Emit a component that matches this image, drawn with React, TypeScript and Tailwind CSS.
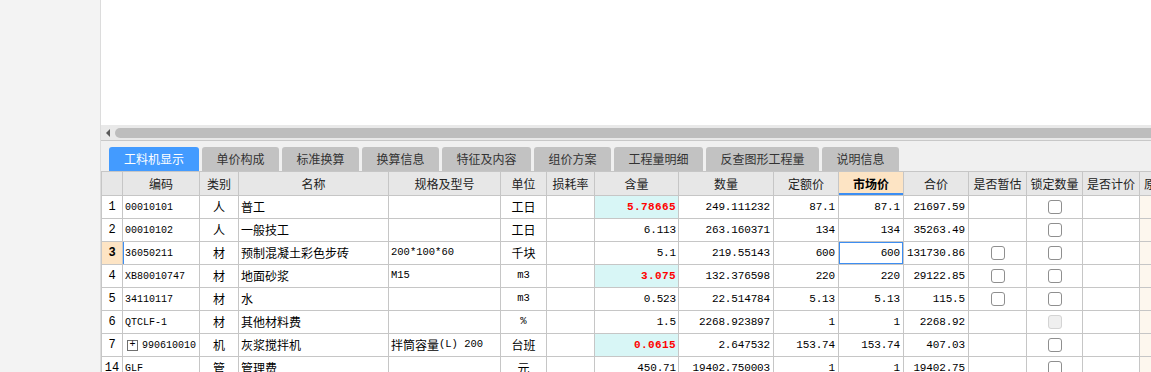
import React from "react";

const cjk = "font-['Noto_Sans_CJK_SC','Noto_Sans',sans-serif]";
const mono = "font-['Liberation_Mono','Noto_Sans_CJK_SC',monospace]";

const tabs = [
  { label: "工料机显示", w: "w-[90px]", active: true },
  { label: "单价构成", w: "w-[77px]" },
  { label: "标准换算", w: "w-[77px]" },
  { label: "换算信息", w: "w-[77px]" },
  { label: "特征及内容", w: "w-[89px]" },
  { label: "组价方案", w: "w-[77px]" },
  { label: "工程量明细", w: "w-[89px]" },
  { label: "反查图形工程量", w: "w-[113px]" },
  { label: "说明信息", w: "w-[77px]" },
];

const cols = [
  { key: "n", title: "", w: "w-[21px]" },
  { key: "code", title: "编码", w: "w-[77px]" },
  { key: "type", title: "类别", w: "w-[39px]" },
  { key: "name", title: "名称", w: "w-[150px]" },
  { key: "spec", title: "规格及型号", w: "w-[112px]" },
  { key: "unit", title: "单位", w: "w-[46px]" },
  { key: "loss", title: "损耗率", w: "w-[48px]" },
  { key: "qty", title: "含量", w: "w-[84px]" },
  { key: "amt", title: "数量", w: "w-[95px]" },
  { key: "quota", title: "定额价", w: "w-[65px]" },
  { key: "market", title: "市场价", w: "w-[65px]" },
  { key: "total", title: "合价", w: "w-[65px]" },
  { key: "est", title: "是否暂估", w: "w-[58px]" },
  { key: "lock", title: "锁定数量", w: "w-[56px]" },
  { key: "priced", title: "是否计价", w: "w-[57px]" },
  { key: "orig", title: "原始含量", w: "w-[60px]" },
];

type Row = {
  n: string;
  code: string;
  plus?: boolean;
  type: string;
  name: string;
  spec?: React.ReactNode;
  unit: string;
  unitMono?: boolean;
  qty: string;
  qtyHi?: boolean;
  amt: string;
  quota: string;
  market: string;
  total: string;
  est?: boolean;
  lock: "on" | "off";
  selected?: boolean;
};

const rows: Row[] = [
  { n: "1", code: "00010101", type: "人", name: "普工", unit: "工日", qty: "5.78665", qtyHi: true, amt: "249.111232", quota: "87.1", market: "87.1", total: "21697.59", lock: "on" },
  { n: "2", code: "00010102", type: "人", name: "一般技工", unit: "工日", qty: "6.113", amt: "263.160371", quota: "134", market: "134", total: "35263.49", lock: "on" },
  { n: "3", code: "36050211", type: "材", name: "预制混凝土彩色步砖", spec: <span className={mono}>200*100*60</span>, unit: "千块", qty: "5.1", amt: "219.55143", quota: "600", market: "600", total: "131730.86", est: true, lock: "on", selected: true },
  { n: "4", code: "XB80010747", type: "材", name: "地面砂浆", spec: <span className={mono}>M15</span>, unit: "m3", unitMono: true, qty: "3.075", qtyHi: true, amt: "132.376598", quota: "220", market: "220", total: "29122.85", est: true, lock: "on" },
  { n: "5", code: "34110117", type: "材", name: "水", unit: "m3", unitMono: true, qty: "0.523", amt: "22.514784", quota: "5.13", market: "5.13", total: "115.5", est: true, lock: "on" },
  { n: "6", code: "QTCLF-1", type: "材", name: "其他材料费", unit: "%", unitMono: true, qty: "1.5", amt: "2268.923897", quota: "1", market: "1", total: "2268.92", lock: "off" },
  {
    n: "7", code: "990610010", plus: true, type: "机", name: "灰浆搅拌机",
    spec: (<><span className={`${cjk} text-[12px]`}>拌筒容量</span><span className={mono}>(L) 200</span></>),
    unit: "台班", qty: "0.0615", qtyHi: true, amt: "2.647532", quota: "153.74", market: "153.74", total: "407.03", lock: "on",
  },
  { n: "14", code: "GLF", type: "管", name: "管理费", unit: "元", qty: "450.71", amt: "19402.750003", quota: "1", market: "1", total: "19402.75", lock: "on" },
];

function Checkbox({ disabled = false }: { disabled?: boolean }) {
  return (
    <span
      className={`block w-[14px] h-[14px] rounded-[3px] border ${
        disabled ? "border-[#d4d4d4] bg-[#efefef]" : "border-[#8f8f8f] bg-white"
      }`}
    />
  );
}

const cellBase = "shrink-0 box-border h-full border-r border-[#c6c6c6] flex items-center overflow-hidden whitespace-nowrap";

function DataRow({ r }: { r: Row }) {
  const num = `${mono} text-[11px] tracking-[-0.15px] text-black justify-end pr-[3px]`;
  return (
    <div className="flex h-[23px] box-border border-b border-l border-[#c6c6c6]">
      <div className={`${cellBase} w-[21px] justify-center ${mono} text-[12px] ${r.selected ? "bg-[#fde4c4] font-bold" : "bg-white"}`}>
        {r.n}
      </div>
      <div className={`${cellBase} w-[77px] relative pl-[2px] ${mono} text-[10px] text-black`}>
        {r.selected && <span className="absolute left-[-1px] top-0 bottom-0 w-[2px] bg-[#3d8ef2]" />}
        {r.plus && (
          <span className="mr-[4px] ml-[2px] flex w-[11px] h-[11px] shrink-0 items-center justify-center border border-[#6f6f6f] text-[10px] leading-none">
            +
          </span>
        )}
        {r.code}
      </div>
      <div className={`${cellBase} w-[39px] justify-center ${cjk} text-[12px] text-black`}>{r.type}</div>
      <div className={`${cellBase} w-[150px] pl-[2px] ${cjk} text-[12px] text-black`}>{r.name}</div>
      <div className={`${cellBase} w-[112px] pl-[2px] text-[10.5px] text-black`}>{r.spec}</div>
      <div className={`${cellBase} w-[46px] justify-center text-black ${r.unitMono ? `${mono} text-[10.5px]` : `${cjk} text-[12px]`}`}>
        {r.unit}
      </div>
      <div className={`${cellBase} w-[48px]`} />
      <div
        className={`${cellBase} w-[84px] ${mono} justify-end pr-[2px] ${
          r.qtyHi ? "bg-[#d8f6f6] text-[#ff0000] font-bold text-[11px] tracking-[0.4px]" : "text-black text-[11px] tracking-[-0.15px]"
        }`}
      >
        {r.qty}
      </div>
      <div className={`${cellBase} w-[95px] ${num}`}>{r.amt}</div>
      <div className={`${cellBase} w-[65px] ${num}`}>{r.quota}</div>
      <div className={`${cellBase} w-[65px] relative ${num}`}>
        {r.selected && <span className="absolute -left-px -top-px -right-px -bottom-px border-2 border-[#3d8ef2]" />}
        {r.market}
      </div>
      <div className={`${cellBase} w-[65px] ${num}`}>{r.total}</div>
      <div className={`${cellBase} w-[58px] justify-center`}>{r.est && <Checkbox />}</div>
      <div className={`${cellBase} w-[56px] justify-center`}>
        <Checkbox disabled={r.lock === "off"} />
      </div>
      <div className={`${cellBase} w-[57px]`} />
      <div className={`${cellBase} w-[60px] bg-[#fdf7ee]`} />
    </div>
  );
}

export default function App() {
  return (
    <div className="flex h-[372px] w-[1151px] overflow-hidden bg-white">
      <aside className="w-[101px] shrink-0 bg-[#f3f3f3] border-r border-[#dcdcdc]" />

      <main className="flex min-w-0 flex-1 flex-col overflow-hidden">
        <div className="h-[125px] shrink-0 bg-white" />

        {/* horizontal scrollbar */}
        <div className="flex h-[16px] shrink-0 items-start box-border border-b border-[#c8c8c8] bg-[#e9e9e9] pt-[3px]">
          <span className="ml-[5px] mt-[1px] h-0 w-0 border-y-[4px] border-r-[4px] border-y-transparent border-r-[#5a5a5a]" />
          <span className="ml-[5px] h-[10px] flex-1 rounded-l-full bg-[#bdbdbd]" />
        </div>

        {/* tabs */}
        <div className="flex h-[30px] shrink-0 items-end gap-[3px] bg-[#f0f0f0] pl-[8px]">
          {tabs.map((t) => (
            <div
              key={t.label}
              className={`${t.w} flex h-[24px] shrink-0 items-center justify-center rounded-t-[3px] ${cjk} text-[12px] ${
                t.active ? "bg-[#439bff] text-white" : "bg-[#c2c2c2] text-[#333]"
              }`}
            >
              {t.label}
            </div>
          ))}
        </div>

        {/* grid */}
        <div className="min-w-0 overflow-hidden">
          <div className="flex h-[25px] w-max box-border border-y border-l border-[#c6c6c6] bg-[#e7e7e7]">
            {cols.map((c) => {
              const market = c.key === "market";
              const orig = c.key === "orig";
              return (
                <div
                  key={c.key}
                  className={`${cellBase} ${c.w} relative ${orig ? "justify-start pl-[4px]" : "justify-center"} ${cjk} text-[12px] ${
                    market ? "bg-[#fde4c4] font-bold text-black" : "text-[#222]"
                  }`}
                >
                  {c.title}
                  {market && <span className="absolute bottom-0 left-0 right-0 h-[2px] bg-[#3d8ef2]" />}
                </div>
              );
            })}
          </div>
          <div className="w-max">
            {rows.map((r) => (
              <DataRow key={r.n} r={r} />
            ))}
          </div>
        </div>
      </main>
    </div>
  );
}
